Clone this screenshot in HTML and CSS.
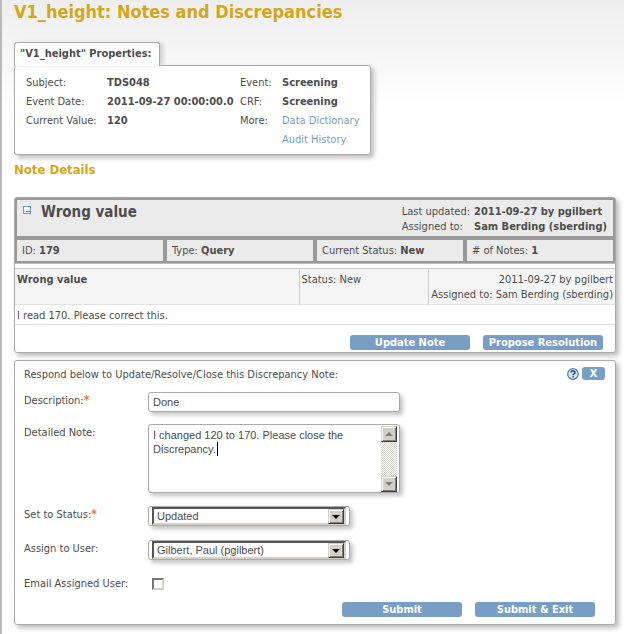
FILE: index.html
```html
<!DOCTYPE html>
<html lang="en">
<head>
<meta charset="utf-8">
<meta name="viewport" content="width=device-width, initial-scale=1">
<title>V1_height: Notes and Discrepancies</title>
<link rel="stylesheet" href="styles.css">
</head>
<body>
<main class="page">
  <h1 class="page-title">V1_height: Notes and Discrepancies</h1>

  <section class="properties">
    <h2 class="tab">"V1_height" Properties:</h2>
    <div class="panel properties-panel">
      <div class="property-grid">
        <span>Subject:</span><b>TDS048</b><span>Event:</span><b>Screening</b>
        <span>Event Date:</span><b>2011-09-27 00:00:00.0</b><span>CRF:</span><b>Screening</b>
        <span>Current Value:</span><b>120</b><span>More:</span><a href="#dictionary">Data Dictionary</a>
        <a class="last-column" href="#audit">Audit History</a>
      </div>
    </div>
  </section>

  <h2 class="section-title">Note Details</h2>

  <section class="panel thread">
    <div class="thread-head">
      <div class="thread-summary">
        <button class="toggle" type="button" aria-label="Collapse note">
          <svg width="9" height="9" viewBox="0 0 9 9"><rect x="0.5" y="0.5" width="7" height="7" fill="#f7fafd" stroke="#749ac0"/><path d="M3 5.5h4" stroke="#58779c"/></svg>
        </button>
        <h3 class="thread-title">Wrong value</h3>
        <div class="thread-meta">
          <span>Last updated:</span><b>2011-09-27 by pgilbert</b>
          <span>Assigned to:</span><b>Sam Berding (sberding)</b>
        </div>
      </div>
      <div class="thread-cell">ID: <b>179</b></div>
      <div class="thread-cell">Type: <b>Query</b></div>
      <div class="thread-cell">Current Status: <b>New</b></div>
      <div class="thread-cell"># of Notes: <b>1</b></div>
    </div>
    <table class="notes">
      <colgroup><col class="col-note"><col class="col-status"><col class="col-author"></colgroup>
      <tr class="note-head">
        <td><b>Wrong value</b></td>
        <td>Status: New</td>
        <td class="author">2011-09-27 by pgilbert<br>Assigned to: Sam Berding (sberding)</td>
      </tr>
      <tr class="note-text"><td colspan="3">I read 170. Please correct this.</td></tr>
    </table>
    <div class="actions thread-actions">
      <button class="button" type="button">Update Note</button>
      <button class="button" type="button">Propose Resolution</button>
    </div>
  </section>

  <form class="panel response">
    <div class="response-head">
      <p>Respond below to Update/Resolve/Close this Discrepancy Note:</p>
      <button class="help" type="button" aria-label="Help">
        <svg width="12" height="12" viewBox="0 0 12 12"><circle cx="6" cy="6" r="5.3" fill="#d5e3f1" stroke="#587da8" stroke-width="1.2"/><path d="M4.1 4.6C4.1 2.3 8 2.3 8 4.5C8 5.8 6.1 5.7 6.1 7.2M6.1 8.2V9.5" fill="none" stroke="#27486f" stroke-width="1.5"/></svg>
      </button>
      <button class="close" type="button" aria-label="Close">X</button>
    </div>
    <div class="fields">
      <label for="description">Description:<span class="required">*</span></label>
      <div class="control"><input class="field text-field" id="description" type="text" value="Done"></div>

      <label for="detail">Detailed Note:</label>
      <div class="control">
        <div class="field note-field">
          <textarea id="detail">I changed 120 to 170. Please close the Discrepancy.</textarea>
          <span class="caret"></span>
          <div class="scrollbar" aria-hidden="true"><span class="bevel scroll-button"><i class="arrow up"></i></span><span class="bevel scroll-button"><i class="arrow down"></i></span></div>
        </div>
      </div>

      <label for="status">Set to Status:<span class="required">*</span></label>
      <div class="control">
        <div class="field select-field">
          <select id="status"><option>Updated</option></select>
          <span class="bevel select-button"><i class="arrow down"></i></span>
        </div>
      </div>

      <label for="user">Assign to User:</label>
      <div class="control">
        <div class="field select-field">
          <select id="user"><option>Gilbert, Paul (pgilbert)</option></select>
          <span class="bevel select-button"><i class="arrow down"></i></span>
        </div>
      </div>

      <label for="email">Email Assigned User:</label>
      <div class="control"><input class="checkbox" id="email" type="checkbox"></div>
    </div>
    <div class="actions response-actions">
      <button class="button" type="submit">Submit</button>
      <button class="button" type="submit">Submit &amp; Exit</button>
    </div>
  </form>
</main>
</body>
</html>
```
FILE: styles.css
```css
* { box-sizing: border-box; }

body {
  margin: 0;
  min-height: 100vh;
  border-left: 2px solid #b9b9b9;
  background: #fff linear-gradient(#eeeeee, #f3f3f3 35px, #ffffff 110px) no-repeat;
  color: #4d4d4d;
  font: 11px/15px Tahoma, "DejaVu Sans Condensed", "Noto Sans", sans-serif;
}

h1, h2, h3, p { margin: 0; }
button, input, textarea, select { margin: 0; padding: 0; color: inherit; font: inherit; }
button { border: 0; background: none; cursor: pointer; }
a { color: #789ec5; text-decoration: none; }
svg { display: block; }

.page { padding: 0 8px 9px 12px; }
.page-title { height: 42px; color: #d4a718; font-size: 18px; line-height: 24px; }
.section-title { margin: 5px 0 17px; color: #d4a718; font-size: 13px; line-height: 20px; }

.panel {
  border: 1px solid #aaa;
  border-radius: 3px;
  background: #fff;
  box-shadow: 3px 3px 5px #bbb;
}

/* Subject properties */
.properties { width: fit-content; }
.tab {
  position: relative;
  width: fit-content;
  margin-bottom: -1px;
  padding: 3px 7px 5px 5px;
  border: 1px solid #aaa;
  border-bottom: 0;
  border-radius: 3px 3px 0 0;
  background: #fff;
  box-shadow: 4px 0 4px -1px #ccc;
  font-size: 11px;
  line-height: 15px;
}
.properties-panel { padding: 7px 10px 5px 11px; }
.property-grid {
  display: grid;
  grid-template-columns: 81px 133px 42px auto;
  line-height: 19px;
  white-space: nowrap;
}
.last-column { grid-column: 4; }

/* Note thread */
.thread { margin-bottom: 7px; }
.thread-head {
  display: grid;
  grid-template-columns: repeat(4, 1fr);
  gap: 4px;
  padding: 2px;
  border-bottom: 1px solid #bbb;
  background: #999;
}
.thread-summary {
  grid-column: 1 / -1;
  display: flex;
  align-items: flex-start;
  height: 36px;
  padding: 4px 6px 2px;
  background: #ebebeb;
}
.toggle { margin: 2px 9px 0 0; }
.thread-title { flex: 1; font-size: 15px; line-height: 16px; }
.thread-meta { display: grid; grid-template-columns: auto auto; column-gap: 4px; }
.thread-cell { height: 21px; padding: 0 5px; background: #ebebeb; line-height: 22px; }

.notes { width: 100%; margin-top: 4px; border-collapse: collapse; table-layout: fixed; }
.notes td { padding: 3px 2px 1px; text-align: left; vertical-align: top; }
.note-head { height: 36px; border-top: 1px solid #ccc; background: #f5f5f5; }
.note-head td + td { border-left: 1px solid #ccc; }
.note-text { height: 20px; border-top: 1px solid #e2e2e2; border-bottom: 1px solid #e2e2e2; }
.notes .author { text-align: right; white-space: nowrap; }
.col-status { width: 129px; }
.col-author { width: 187px; }

.actions { display: flex; justify-content: flex-end; gap: 13px; }
.thread-actions { padding: 10px 12px 2px; }
.button {
  width: 120px;
  height: 15px;
  border-radius: 3px;
  background: #789ec5;
  color: #fff;
  font-weight: bold;
  line-height: 15px;
}

/* Response form */
.response { padding: 6px 10px 7px 9px; }
.response-head { display: flex; align-items: flex-start; gap: 3px; margin-bottom: 8px; }
.response-head p { flex: 1; line-height: 16px; }
.help { margin-top: 1px; }
.close { width: 23px; height: 13px; border-radius: 3px; background: #789ec5; color: #fff; font-weight: bold; line-height: 13px; }

.fields {
  display: grid;
  grid-template-columns: 124px 1fr;
  grid-template-rows: 32px 82px 34px 35px 28px;
}
.fields label { padding-top: 2px; }
.required { color: #e8762c; font-size: 12px; font-weight: bold; line-height: 11px; }
.control { padding-top: 1px; }
.field {
  display: flex;
  border: 1px solid #aaa;
  border-radius: 3px;
  background: #fff;
  box-shadow: 3px 3px 4px #c4c4c4;
  font: 11px/14px "Liberation Sans", Arial, sans-serif;
}
.text-field { width: 252px; height: 20px; padding: 0 4px; }
.note-field { position: relative; width: 252px; height: 69px; padding: 1px 2px 0 4px; }
.note-field textarea { flex: 1; min-width: 0; padding-top: 2px; border: 0; outline: 0; background: none; overflow: hidden; resize: none; }
.caret { position: absolute; top: 17px; left: 68px; width: 1px; height: 14px; background: #000; }
.scrollbar {
  display: flex;
  flex-direction: column;
  justify-content: space-between;
  width: 16px;
  background: repeating-conic-gradient(#d6d3cc 0 25%, #fff 0 50%) 0 0 / 2px 2px;
}
.bevel {
  display: flex;
  align-items: center;
  justify-content: center;
  width: 16px;
  height: 16px;
  border: 1px solid;
  border-color: #d4d0c8 #404040 #404040 #d4d0c8;
  background: #d4d0c8;
  box-shadow: inset 1px 1px #fff, inset -1px -1px #808080;
  color: #000;
}
.scroll-button { color: #808080; }
.arrow { border: 4px solid transparent; }
.up { border-top: 0; border-bottom-color: currentColor; }
.down { border-bottom: 0; border-top-color: currentColor; }

.select-field { position: relative; width: 202px; height: 20px; padding: 0 3px; }
.select-field select {
  flex: 1;
  padding: 0 3px;
  border: 2px solid;
  border-color: #555 #d4d0c8 #d4d0c8 #555;
  border-radius: 0;
  outline: 0;
  background: #fff;
  appearance: none;
}
.select-button { position: absolute; top: 2px; right: 5px; height: 15px; pointer-events: none; }
.checkbox {
  width: 12px;
  height: 12px;
  margin: 3px 4px;
  border: 2px solid;
  border-color: #777 #d4d0c8 #d4d0c8 #777;
  background: #fff;
  appearance: none;
}
.checkbox:checked { background: #4d4d4d; }
.response-actions { padding-right: 10px; }
```
